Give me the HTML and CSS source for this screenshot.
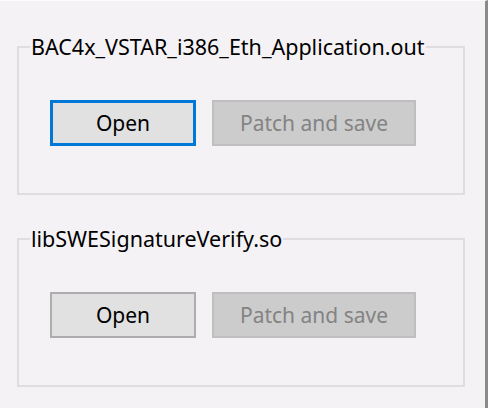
FILE: index.html
```html
<!DOCTYPE html>
<html>
<head>
<meta charset="utf-8">
<link rel="stylesheet" href="styles.css">
</head>
<body>
<div class="window">
  <fieldset class="group">
    <legend class="group-title">BAC4x_VSTAR_i386_Eth_Application.out</legend>
    <div class="actions">
      <button class="btn btn-focus">Open</button>
      <button class="btn btn-wide" disabled>Patch and save</button>
    </div>
  </fieldset>
  <fieldset class="group">
    <legend class="group-title">libSWESignatureVerify.so</legend>
    <div class="actions">
      <button class="btn">Open</button>
      <button class="btn btn-wide" disabled>Patch and save</button>
    </div>
  </fieldset>
</div>
</body>
</html>
```

FILE: styles.css
```css
html, body {
  margin: 0;
  padding: 0;
}
body {
  width: 488px;
  height: 408px;
  background: #f5f2f6;
  overflow: hidden;
  font-family: "Noto Sans", "Open Sans", sans-serif;
}
.window {
  box-sizing: border-box;
  width: 488px;
  height: 408px;
  border-right: 3px solid #8a8a8a;
  border-top: 1px solid #fbfafc;
  padding: 32px 20px 0 17px;
  display: flex;
  flex-direction: column;
  gap: 30px;
}
.group {
  margin: 0;
  padding: 0 0 0 31px;
  border: 2px solid #e0dde2;
  width: 448px;
  height: 162px;
  box-sizing: border-box;
}
.group-title {
  margin-left: -20px;
  padding: 0 1px;
  font-size: 21.5px;
  line-height: 28px;
  color: #000;
}
.actions {
  display: flex;
  gap: 16px;
  padding-top: 39px;
}
.btn {
  box-sizing: border-box;
  width: 146px;
  height: 46px;
  font-family: "Noto Sans", "Open Sans", sans-serif;
  font-size: 21px;
  color: #000;
  background: #e1e1e1;
  border: 2px solid #adadad;
  padding: 0;
  margin: 0;
}
.btn-focus {
  border: 3px solid #0078d7;
}
.btn-wide {
  width: 204px;
}
.btn:disabled {
  background: #cccccc;
  border-color: #bfbfbf;
  color: #838383;
}
```
